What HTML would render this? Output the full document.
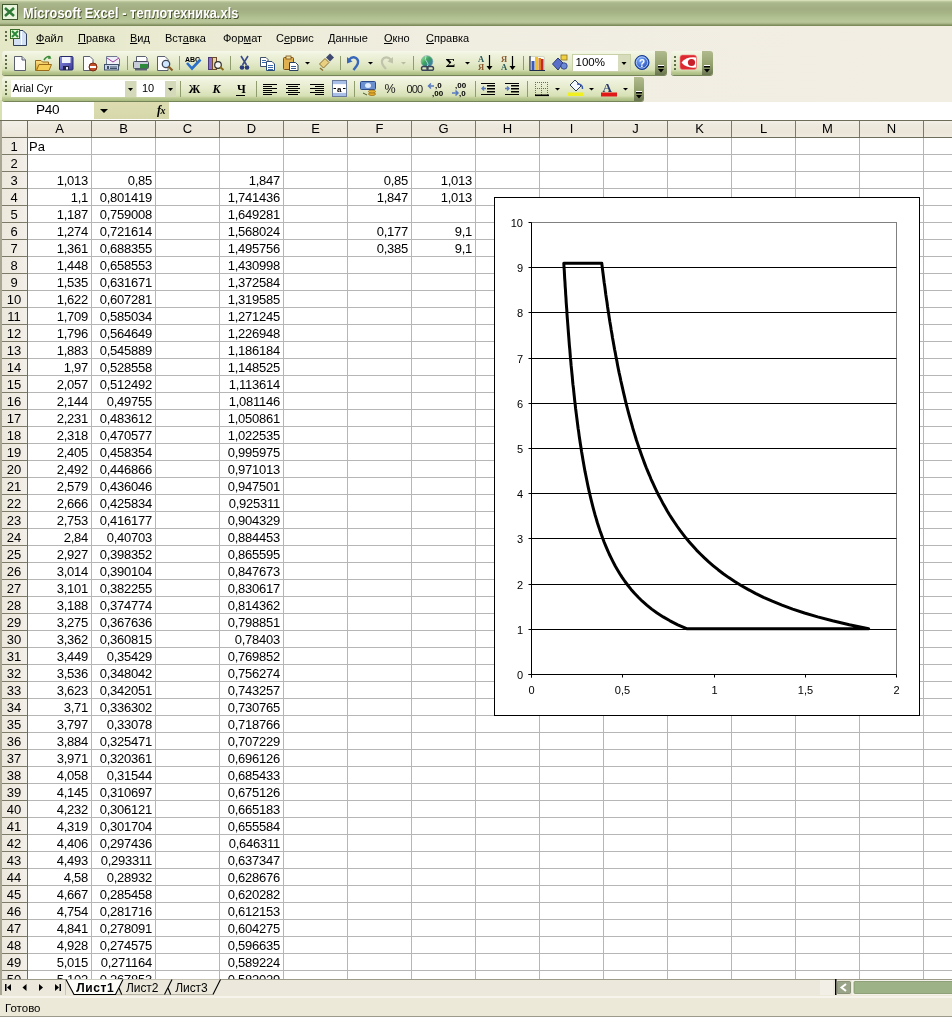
<!DOCTYPE html>
<html><head><meta charset="utf-8"><title>Excel</title>
<style>
html,body{margin:0;padding:0}
body{width:952px;height:1017px;position:relative;overflow:hidden;background:#fff;font-family:"Liberation Sans",sans-serif;color:#000}
.abs{position:absolute}
#title{position:absolute;left:0;top:0;width:952px;height:26px;
 background:linear-gradient(#e6eec8 0px,#c4cea4 1px,#a9b58b 3px,#a2ae82 9px,#a6b486 13px,#b2c292 18px,#b9c69a 22px,#a4b082 24px,#7e8c5c 25px,#7e8c5c 26px)}
#title .t{position:absolute;left:23px;top:5px;font:bold 14px/17px "Liberation Sans",sans-serif;color:#fff;text-shadow:1px 1px 0 #4a5230;white-space:nowrap;letter-spacing:0.1px;transform:scaleX(0.91);transform-origin:0 0}
#menubar{position:absolute;left:0;top:26px;width:952px;height:24px;background:linear-gradient(90deg,#e4e8c6 0px,#ebebd4 200px,#f0ede1 420px,#f2eee4 952px)}
#menubar .m{position:absolute;top:6px;font-size:11px;line-height:13px;white-space:nowrap}
#dock{position:absolute;left:0;top:50px;width:952px;height:52px;background:linear-gradient(90deg,#e4e8c6 0px,#ebebd4 200px,#f0ede1 420px,#f2eee4 952px)}
.tb{position:absolute;border-radius:3px;background:linear-gradient(#f6f8ea 0px,#eef2dc 4px,#e4eaca 12px,#d6e0b4 19px,#bccb94 21px,#a8ba80 24px);box-shadow:0 1px 0 #76845a}
.grip{position:absolute;width:2px;height:2px;background:#6b7550;box-shadow:1px 1px 0 #fff}
.chev{position:absolute;border-radius:0 3px 3px 0;background:linear-gradient(#b1bb8e,#919f6c 60%,#6a7550)}
.sep{position:absolute;width:1px;background:#8f9c6d;box-shadow:1px 0 0 #fff}
.dd{position:absolute;width:0;height:0;border-left:3px solid transparent;border-right:3px solid transparent;border-top:3px solid #000}
#fbar{position:absolute;left:0;top:102px;width:952px;height:18px;background:#fff}
#gridwrap{}
#grid{position:absolute;left:0;top:120px;width:952px;height:859px;background:#fff;overflow:hidden}
#cells{position:absolute;left:0;top:0;width:952px;height:859px;
 background-image:linear-gradient(90deg,transparent 63px,#b6b6b6 63px,#b6b6b6 64px,transparent 64px),linear-gradient(transparent 16px,#b6b6b6 16px,#b6b6b6 17px,transparent 17px);
 background-size:64px 17px,17px 17px;background-position:28px 18px,28px 18px}
.c{position:absolute;width:61px;height:17px;text-align:right;font-size:13px;line-height:17px;white-space:nowrap;letter-spacing:-0.25px}
.cl{position:absolute;height:17px;font-size:13px;line-height:17px;white-space:nowrap}
#colhdr{position:absolute;left:0;top:0;width:952px;height:859px}
#hrow{position:absolute;left:0;top:1px;width:952px;height:16px;background:linear-gradient(#f3f0e8 0px,#eee9de 4px,#ece5d9 11px,#efeae0 16px);
 background-image:linear-gradient(90deg,transparent 63px,#7c7b6a 63px,#7c7b6a 64px,transparent 64px),linear-gradient(#f3f0e8 0px,#eee9de 4px,#ece5d9 11px,#efeae0 16px);
 background-size:64px 16px,100% 100%;background-position:28px 0,0 0;background-repeat:repeat-x,no-repeat;border-bottom:1px solid #6e6d5c}
#rcol{position:absolute;left:0;top:18px;width:27px;height:841px;border-right:1px solid #6e6d5c;
 background-image:linear-gradient(transparent 16px,#7c7b6a 16px,#7c7b6a 17px,transparent 17px),linear-gradient(90deg,#ece8dc,#f0ece4 70%,#f3f0ea);
 background-size:27px 17px,100% 100%;background-repeat:repeat-y,no-repeat}
#corner{position:absolute;left:0;top:1px;width:27px;height:16px;border-right:1px solid #6e6d5c;background:linear-gradient(#f3f0e8,#ece6da)}
#fline{position:absolute;left:0;top:0;width:952px;height:1px;background:#6c6c58}
#wedge{position:absolute;left:0;top:0;width:2px;height:859px;background:#a9a793}
.ch{position:absolute;top:0px;width:63px;height:16px;text-align:center;font-size:13px;line-height:17px}
.rh{position:absolute;left:1px;width:26px;height:16px;text-align:center;font-size:13px;line-height:17px}
.chart{position:absolute;left:494px;top:197px}
.chart .ax{font-family:"Liberation Sans",sans-serif;font-size:11px}
#tabs{position:absolute;left:0;top:979px;width:952px;height:16px;background:#ece9dc}
#status{position:absolute;left:0;top:995px;width:952px;height:22px;background:#ece9d8}

#title,#menubar,#fbar,#grid,#tabs,#status,.chart,.tbsvg{will-change:transform}

</style></head><body>
<div id="title">
 <svg class="abs" style="left:2px;top:4px" width="16" height="16" viewBox="0 0 16 16"><rect x="0.5" y="0.5" width="15" height="15" fill="#e8f4dc" stroke="#3e5a2c"/><path d="M3 4 L12 12 M12 4 L3 12" stroke="#2e7a36" stroke-width="2.5"/></svg>
 <div class="t">Microsoft Excel - теплотехника.xls</div>
</div>
<div id="menubar">
 <svg class="abs" style="left:0;top:0" width="30" height="24" viewBox="0 26 30 24">
  <g fill="#5f6a48"><rect x="5" y="31" width="2" height="2"/><rect x="5" y="35" width="2" height="2"/><rect x="5" y="39" width="2" height="2"/></g>
  <path d="M13.5 30.5 H23 L26.5 34 V45.5 H13.5 Z" fill="#d4e0f4" stroke="#30405a"/><rect x="21" y="31" width="1" height="14" fill="#fff"/>
  <rect x="10.5" y="29.5" width="9" height="9" fill="#e8f8d8" stroke="#3a6a2a"/><path d="M12 31 L18 37 M18 31 L12 37" stroke="#2a8a3a" stroke-width="2"/>
 </svg>
 <div class="m" style="left:36px"><u>Ф</u>айл</div>
 <div class="m" style="left:78px"><u>П</u>равка</div>
 <div class="m" style="left:130px"><u>В</u>ид</div>
 <div class="m" style="left:165px">Вст<u>а</u>вка</div>
 <div class="m" style="left:223px">Фор<u>м</u>ат</div>
 <div class="m" style="left:276px">С<u>е</u>рвис</div>
 <div class="m" style="left:328px"><u>Д</u>анные</div>
 <div class="m" style="left:384px"><u>О</u>кно</div>
 <div class="m" style="left:426px"><u>С</u>правка</div>
</div>
<div id="dock"></div>
<div class="tb" style="left:2px;top:51px;width:665px;height:24px"></div>
<div class="chev" style="left:655px;top:51px;width:12px;height:24px"></div>
<div class="tb" style="left:671px;top:51px;width:42px;height:24px"></div>
<div class="chev" style="left:702px;top:51px;width:11px;height:24px"></div>
<div class="tb" style="left:2px;top:77px;width:642px;height:24px"></div>
<div class="chev" style="left:634px;top:77px;width:10px;height:24px"></div>
<svg class="abs tbsvg" style="left:0;top:50px" width="952" height="52" viewBox="0 50 952 52" font-family="Liberation Sans, sans-serif">
<defs>
 <linearGradient id="gFold" x1="0" y1="0" x2="0" y2="1"><stop offset="0" stop-color="#ffe58a"/><stop offset="1" stop-color="#d49a2a"/></linearGradient>
 <linearGradient id="gSave" x1="0" y1="0" x2="1" y2="1"><stop offset="0" stop-color="#8c8ee0"/><stop offset="1" stop-color="#3a3a9a"/></linearGradient>
 <linearGradient id="gGlobe" x1="0" y1="0" x2="1" y2="1"><stop offset="0" stop-color="#a8f0a0"/><stop offset="0.45" stop-color="#3aa060"/><stop offset="1" stop-color="#3a70c8"/></linearGradient>
 <radialGradient id="gHelp" cx="0.4" cy="0.35" r="0.7"><stop offset="0" stop-color="#7fb0ff"/><stop offset="1" stop-color="#1840b0"/></radialGradient>
</defs>
<!-- grips -->
<g fill="#5f6a48">
 <rect x="5" y="55" width="2" height="2"/><rect x="5" y="59" width="2" height="2"/><rect x="5" y="63" width="2" height="2"/><rect x="5" y="67" width="2" height="2"/>
 <rect x="5" y="81" width="2" height="2"/><rect x="5" y="85" width="2" height="2"/><rect x="5" y="89" width="2" height="2"/><rect x="5" y="93" width="2" height="2"/>
 <rect x="674" y="56" width="2" height="2"/><rect x="674" y="60" width="2" height="2"/><rect x="674" y="64" width="2" height="2"/><rect x="674" y="68" width="2" height="2"/>
</g>
<!-- New -->
<path d="M14.5 56.5 H22 L25.5 60 V70.5 H14.5 Z" fill="#fdfdff" stroke="#5a6070"/><path d="M22 56.5 V60 H25.5" fill="#cfd4e0" stroke="#5a6070"/>
<!-- Open -->
<path d="M35.5 60.5 H41 L42.5 62 H48.5 V70.5 H35.5 Z" fill="url(#gFold)" stroke="#9a6a18"/><path d="M36.5 70.5 L39 64.5 H51.5 L49 70.5 Z" fill="#f6cf58" stroke="#9a6a18"/>
<path d="M44 60 Q47 55 50.5 57.5" fill="none" stroke="#3a8a3a" stroke-width="1.6"/><path d="M49 55.5 L51.5 58.5 L48 59 Z" fill="#3a8a3a"/>
<!-- Save -->
<rect x="59.5" y="56.5" width="13.5" height="13.5" rx="1" fill="url(#gSave)" stroke="#262a6a"/><rect x="62" y="57" width="8.5" height="6" fill="#f2f4ff"/><rect x="63" y="66" width="6" height="4" fill="#20204a"/><rect x="66" y="67" width="2" height="2.5" fill="#e8e8ff"/>
<!-- Permission -->
<path d="M83.5 56.5 H90 L93 59.5 V70.5 H83.5 Z" fill="#fdfdff" stroke="#5a6070"/><circle cx="93" cy="67" r="4" fill="#c2502a" stroke="#7a2a10"/><rect x="90" y="66" width="6" height="2" fill="#fff"/>
<!-- Email -->
<path d="M106.5 56.5 H117 L119.5 59 V66 H106.5 Z" fill="#f0f0f8" stroke="#707890"/><path d="M107 58 L113 62 L119 58" fill="none" stroke="#a040a0" stroke-width="1"/>
<rect x="104.5" y="64.5" width="14" height="5.5" fill="#c8d4e8" stroke="#40506a"/><rect x="107" y="66" width="2" height="3" fill="#40506a"/><rect x="110" y="66.5" width="7" height="1" fill="#40506a"/><rect x="110" y="68" width="7" height="1" fill="#40506a"/>
<!-- seps -->
<g fill="#8f9c6d"><rect x="127" y="56" width="1" height="14"/><rect x="179" y="56" width="1" height="14"/><rect x="230" y="56" width="1" height="14"/><rect x="340" y="56" width="1" height="14"/><rect x="413" y="56" width="1" height="14"/><rect x="523" y="56" width="1" height="14"/>
<rect x="180" y="81" width="1" height="16"/><rect x="256" y="81" width="1" height="16"/><rect x="354" y="81" width="1" height="16"/><rect x="475" y="81" width="1" height="16"/><rect x="527" y="81" width="1" height="16"/></g>
<!-- Print -->
<path d="M136.5 56.5 H145.5 L147 58 V62 H136.5 Z" fill="#fff" stroke="#5a6070"/><rect x="133.5" y="61.5" width="15" height="7" rx="1" fill="#c8ccd8" stroke="#4a5060"/><rect x="140" y="64" width="8" height="4.5" fill="#2a8a3a"/><rect x="135" y="68.5" width="12" height="2" fill="#5a6070"/>
<!-- Preview -->
<path d="M157.5 56.5 H165 L168 59.5 V70.5 H157.5 Z" fill="#fdfdff" stroke="#5a6070"/><circle cx="166" cy="64" r="3.7" fill="#cfe6ff" stroke="#404858" stroke-width="1.3"/><path d="M168.5 66.5 L172.5 70.5" stroke="#8a5a20" stroke-width="2.2"/>
<!-- Spelling -->
<text x="185" y="61.5" font-size="7" font-weight="bold" fill="#000">ABC</text><path d="M187 63 L192 68.5 L200.5 59.5" fill="none" stroke="#2a70c8" stroke-width="2.6"/>
<!-- Research -->
<rect x="208.5" y="57.5" width="4" height="12" fill="#8a70c8" stroke="#4a3a7a"/><rect x="212.5" y="57.5" width="4" height="12" fill="#e8d4a8" stroke="#6a4a2a"/><circle cx="218" cy="65" r="3.3" fill="#f4f4f4" stroke="#303030" stroke-width="1.2"/><path d="M220 67 L223.5 70" stroke="#8a6a1a" stroke-width="2"/>
<!-- Cut -->
<path d="M241 56 L246.5 65 M248 56 L242.5 65" stroke="#3a4a8a" stroke-width="1.6"/><circle cx="242" cy="67.5" r="2.3" fill="#2a3a7a"/><circle cx="247" cy="67.5" r="2.3" fill="#2a3a7a"/>
<!-- Copy -->
<path d="M260.5 57.5 H266 L268 59.5 V66.5 H260.5 Z" fill="#fff" stroke="#40506a"/><path d="M266.5 61.5 H272 L274.5 64 V70.5 H266.5 Z" fill="#fff" stroke="#2a4a7a"/><g fill="#3a6aa8"><rect x="262" y="60" width="4" height="1"/><rect x="262" y="62" width="4" height="1"/><rect x="268" y="65" width="5" height="1"/><rect x="268" y="67" width="5" height="1"/><rect x="268" y="69" width="5" height="1"/></g>
<!-- Paste -->
<rect x="283.5" y="57.5" width="10" height="12" rx="1" fill="#e0b050" stroke="#7a5018"/><rect x="286" y="56" width="5" height="3" fill="#f0e0a0" stroke="#7a5018" stroke-width="0.8"/><path d="M289.5 62.5 H295.5 L298 65 V70.5 H289.5 Z" fill="#fff" stroke="#2a4060"/><rect x="291" y="66" width="5" height="1" fill="#3a5a90"/><rect x="291" y="68" width="5" height="1" fill="#3a5a90"/>
<!-- dropdowns -->
<g fill="#000"><path d="M305 62 H310 L307.5 64.5 Z"/><path d="M368 62 H373 L370.5 64.5 Z"/><path d="M465 62 H470 L467.5 64.5 Z"/></g>
<path d="M401 62 H406 L403.5 64.5 Z" fill="#b8bca0"/>
<!-- Format painter -->
<path d="M319.5 64 L325 58.5 L329 62.5 L323.5 68 Z" fill="#e8d080" stroke="#8a7030"/><path d="M326 57.5 L330 53.5 L334 57.5 L330 61.5 Z" fill="#404a70"/><path d="M320 68 L323 70.5" stroke="#8a7030" stroke-width="1.5"/>
<!-- Undo -->
<path d="M349 60 Q352 56 356 58 Q360 61 356.5 66 L353.5 70" fill="none" stroke="#3a68b8" stroke-width="2.4"/><path d="M347 57 L352.5 61.5 L347 63.5 Z" fill="#3a68b8"/>
<!-- Redo disabled -->
<path d="M391 60 Q388 56 384 58 Q380 61 383.5 66 L386 69" fill="none" stroke="#c0c4aa" stroke-width="2.2"/><path d="M393 57 L387.5 61.5 L393 63.5 Z" fill="#c0c4aa"/>
<!-- Hyperlink -->
<circle cx="427" cy="61.5" r="5.8" fill="url(#gGlobe)" stroke="#6a9aa8" stroke-width="0.6"/><path d="M426 56 Q424 60 427 62 Q429 64 427 67" fill="none" stroke="#d8f0ff" stroke-width="0.9" opacity="0.8"/>
<rect x="421.5" y="66.5" width="6.5" height="3.8" rx="1.9" fill="none" stroke="#3a4458" stroke-width="1.4"/><rect x="427" y="66.5" width="6.5" height="3.8" rx="1.9" fill="none" stroke="#3a4458" stroke-width="1.4"/>
<!-- Sigma -->
<text x="445.5" y="67" font-size="13.5" font-weight="bold" font-family="Liberation Serif, serif" fill="#000" transform="translate(445.5 67) scale(1.1 1) translate(-445.5 -67)">&#931;</text>
<!-- Sort asc -->
<text x="478" y="62" font-size="8.5" font-weight="bold" font-family="Liberation Serif, serif" fill="#2a5a5a">A</text><text x="478" y="70" font-size="8.5" font-weight="bold" font-family="Liberation Serif, serif" fill="#8a5a30">Я</text><path d="M489.5 55 V69" stroke="#000" stroke-width="1.2"/><path d="M486.5 66 L489.5 70 L492.5 66 Z" fill="#000"/>
<!-- Sort desc -->
<text x="501" y="62" font-size="8.5" font-weight="bold" font-family="Liberation Serif, serif" fill="#8a5a30">Я</text><text x="501" y="70" font-size="8.5" font-weight="bold" font-family="Liberation Serif, serif" fill="#2a5a5a">A</text><path d="M512.5 56 V69" stroke="#000" stroke-width="1.2"/><path d="M509.5 66 L512.5 70 L515.5 66 Z" fill="#000"/>
<!-- Chart wizard -->
<rect x="529.5" y="56.5" width="15" height="14" rx="1.5" fill="#fbfbf6" stroke="#c8ccb8" stroke-width="0.8"/>
<path d="M530 56 V70.5 H545" fill="none" stroke="#1e2a4a" stroke-width="1.2"/><rect x="531.5" y="61" width="3" height="9" fill="#3a5ab8"/><rect x="535" y="57" width="3" height="13" fill="#f0c030"/><rect x="538.5" y="58" width="2.5" height="12" fill="#e07a20"/><rect x="541" y="59" width="2.5" height="11" fill="#c02a2a"/>
<!-- Drawing -->
<path d="M552.5 64 L558 58 L563 63 L558 70 Z" fill="#5a70c8" stroke="#2a3a7a"/><rect x="561" y="55" width="6" height="5" fill="#f0d040" stroke="#8a7020" stroke-width="0.8"/><circle cx="564" cy="66" r="3.2" fill="#6a8ad8" stroke="#2a3a7a" stroke-width="0.8"/>
<!-- Zoom box -->
<rect x="572.5" y="54.5" width="58" height="17" fill="#fff" stroke="#c8d0a8"/><rect x="618" y="55" width="12" height="16" fill="#d6dcbc"/><path d="M621.5 62 H626.5 L624 65 Z" fill="#000"/>
<text x="575.5" y="65.7" font-size="11.5" fill="#000">100%</text>
<!-- Help -->
<circle cx="642" cy="62.5" r="7" fill="url(#gHelp)" stroke="#163a8a" stroke-width="1"/><circle cx="642" cy="62.5" r="5.6" fill="none" stroke="#c8dcff" stroke-width="0.8"/><text x="642" y="66.5" font-size="10" font-weight="bold" text-anchor="middle" fill="#fff">?</text>
<!-- Chevron glyphs -->
<g fill="#000"><rect x="658" y="66" width="6" height="1.5"/><path d="M658 69 H664 L661 72.5 Z"/><rect x="704" y="66" width="6" height="1.5"/><path d="M704 69 H710 L707 72.5 Z"/><rect x="636" y="92" width="6" height="1.5"/><path d="M636 95 H642 L639 98.5 Z"/></g>
<g fill="#fff"><rect x="658" y="65" width="6" height="1"/><rect x="704" y="65" width="6" height="1"/><rect x="636" y="91" width="6" height="1"/></g>
<!-- Red ABBYY icon -->
<rect x="680" y="55" width="16.5" height="14.5" rx="2.5" fill="#dc2a30" stroke="#f08a8a" stroke-width="0.6"/><path d="M681.5 62.5 Q686 56.5 696 57.5 L696 67.5 Q686 68.5 681.5 62.5 Z" fill="#fff"/><circle cx="691.5" cy="62.5" r="3.6" fill="#c8202a"/>
<!-- Toolbar 2: font box -->
<rect x="11" y="80" width="126" height="17" fill="#fff"/><rect x="125" y="81" width="11.5" height="16" fill="#d4d9ba"/><path d="M128 88 H133 L130.5 91 Z" fill="#000"/>
<text x="12.5" y="92" font-size="10.5" fill="#000">Arial Cyr</text>
<rect x="137" y="80" width="39" height="17" fill="#fff"/><rect x="165" y="81" width="11" height="16" fill="#d4d9ba"/><path d="M168 88 H173 L170.5 91 Z" fill="#000"/>
<text x="142" y="92" font-size="11" fill="#000">10</text>
<!-- B I U -->
<text x="188.5" y="93" font-size="12" font-weight="bold" font-family="Liberation Serif, serif" fill="#000">Ж</text>
<text x="212.5" y="93" font-size="12" font-weight="bold" font-style="italic" font-family="Liberation Serif, serif" fill="#000">К</text>
<text x="237" y="93" font-size="12" font-weight="bold" font-family="Liberation Serif, serif" fill="#000">Ч</text><rect x="236" y="95" width="9" height="1" fill="#000"/>
<!-- align -->
<g fill="#000">
 <rect x="263" y="84" width="14" height="1"/><rect x="263" y="86" width="9" height="1"/><rect x="263" y="88" width="14" height="1"/><rect x="263" y="90" width="9" height="1"/><rect x="263" y="92" width="14" height="1"/><rect x="263" y="94" width="9" height="1"/>
 <rect x="286" y="84" width="14" height="1"/><rect x="288" y="86" width="10" height="1"/><rect x="286" y="88" width="14" height="1"/><rect x="288" y="90" width="10" height="1"/><rect x="286" y="92" width="14" height="1"/><rect x="288" y="94" width="10" height="1"/>
 <rect x="310" y="84" width="14" height="1"/><rect x="315" y="86" width="9" height="1"/><rect x="310" y="88" width="14" height="1"/><rect x="315" y="90" width="9" height="1"/><rect x="310" y="92" width="14" height="1"/><rect x="315" y="94" width="9" height="1"/>
</g>
<!-- merge -->
<rect x="332.5" y="80.5" width="14" height="16" fill="#f4f6fa" stroke="#6a7a9a"/><rect x="333" y="81" width="13" height="3" fill="#a8c0e8"/><rect x="333" y="93" width="13" height="3" fill="#a8c0e8"/><rect x="333" y="85" width="13" height="7" fill="#fff"/><text x="337" y="91.5" font-size="8" font-weight="bold" fill="#000">a</text><path d="M333.5 88.5 H336 M343 88.5 H345.5" stroke="#000"/>
<!-- currency -->
<rect x="360.5" y="81.5" width="15" height="8" rx="1" fill="#6a90d0" stroke="#2a4a8a"/><ellipse cx="368" cy="85.5" rx="3" ry="2.5" fill="#e0ecff"/><ellipse cx="372" cy="94" rx="3.5" ry="1.5" fill="#e8b030" stroke="#8a6010" stroke-width="0.7"/><ellipse cx="372" cy="91.5" rx="3.5" ry="1.5" fill="#e8b030" stroke="#8a6010" stroke-width="0.7"/><path d="M363 93 L367 95" stroke="#4a5a2a"/>
<text x="384.5" y="93" font-size="12.5" fill="#1a1a1a">%</text>
<text x="406.5" y="93" font-size="11" fill="#1a1a1a" letter-spacing="-0.9">000</text>
<!-- inc/dec decimal -->
<text x="435" y="88" font-size="8" font-weight="bold" fill="#000">,0</text><text x="432" y="96" font-size="8" font-weight="bold" fill="#000">,00</text><path d="M434 86 H428.5 M431 83.5 L428.5 86 L431 88.5" fill="none" stroke="#5a7ac0" stroke-width="1.5"/>
<text x="455" y="88" font-size="8" font-weight="bold" fill="#000">,00</text><text x="459" y="96" font-size="8" font-weight="bold" fill="#000">,0</text><path d="M452 93 H458 M455.5 90.5 L458 93 L455.5 95.5" fill="none" stroke="#5a7ac0" stroke-width="1.5"/>
<!-- indent -->
<g fill="#000"><rect x="481" y="83" width="14" height="1"/><rect x="487" y="85" width="8" height="1.5"/><rect x="487" y="88" width="8" height="1.5"/><rect x="487" y="91" width="8" height="1.5"/><rect x="481" y="94" width="14" height="1"/>
<rect x="505" y="83" width="14" height="1"/><rect x="511" y="85" width="8" height="1.5"/><rect x="511" y="88" width="8" height="1.5"/><rect x="511" y="91" width="8" height="1.5"/><rect x="505" y="94" width="14" height="1"/></g>
<path d="M486 88.5 L482 88.5 M484 86.5 L482 88.5 L484 90.5" fill="none" stroke="#5a7ac0" stroke-width="1.4"/><path d="M505 88.5 L509 88.5 M507 86.5 L509 88.5 L507 90.5" fill="none" stroke="#5a7ac0" stroke-width="1.4"/>
<!-- borders -->
<g stroke="#6a6a6a" stroke-width="1" stroke-dasharray="1 1" fill="none"><path d="M535 82.5 H548 M535 88.5 H548 M535.5 82 V95 M541.5 82 V95 M547.5 82 V95"/></g><rect x="535" y="94.5" width="14" height="1.6" fill="#000"/>
<g fill="#000"><path d="M555 88 H560 L557.5 90.5 Z"/><path d="M589 88 H594 L591.5 90.5 Z"/><path d="M623 88 H628 L625.5 90.5 Z"/></g>
<!-- fill color -->
<path d="M570 85 L575 80 L581 86 L576 91 Z" fill="#f4f8ff" stroke="#2a3a5a"/><path d="M577 84 Q583 84 582.5 89" fill="none" stroke="#3a5ab0" stroke-width="1.5"/><rect x="568" y="92.5" width="15" height="3.5" fill="#f0f020"/>
<!-- font color -->
<text x="602.5" y="91.5" font-size="13" font-weight="bold" font-family="Liberation Serif, serif" fill="#2a3a6a">A</text><rect x="601" y="92.5" width="16" height="4" fill="#e01818"/>
</svg>

<div id="fbar">
 <div class="abs" style="left:2px;top:0px;width:92px;height:18px;background:#fff"></div>
 <div class="abs" style="left:36px;top:0px;font-size:13.6px;line-height:15px;letter-spacing:-0.3px">P40</div><div class="abs" style="left:0;top:-2px;width:2px;height:20px;background:#d6e0b2"></div>
 <div class="abs" style="left:94px;top:0px;width:75px;height:17px;background:linear-gradient(#dcdcb0,#d6d8ac)"></div>
 <div class="abs" style="left:100px;top:7px;width:0;height:0;border-left:4px solid transparent;border-right:4px solid transparent;border-top:4px solid #000"></div>
 <div class="abs" style="left:157px;top:0px;font:italic bold 12px 'Liberation Serif',serif;letter-spacing:-0.5px;line-height:16px">f<span style="font-size:10px">x</span></div>
</div>
<div id="tabs">
<svg class="abs" style="left:0;top:0" width="952" height="16" viewBox="0 979 952 16" font-family="Liberation Sans, sans-serif">
 <rect x="0" y="979" width="952" height="1" fill="#9c9a88"/>
 <rect x="0" y="979" width="2" height="16" fill="#a9a793"/>
 <g fill="#000">
  <rect x="5" y="984" width="1.5" height="7"/><path d="M11 984 V991 L7 987.5 Z"/>
  <path d="M26.5 984 V991 L22.5 987.5 Z"/>
  <path d="M39 984 V991 L43 987.5 Z"/>
  <path d="M55 984 V991 L59 987.5 Z"/><rect x="59.5" y="984" width="1.5" height="7"/>
 </g>
 <rect x="65" y="980" width="1" height="15" fill="#c8c6b4"/>
 <!-- tabs -->
 <path d="M123 979.5 L116 994.5 H164.5 L172 979.5" fill="#ebe8db"/>
 <path d="M172 979.5 L164.5 994.5 H213 L220.5 979.5" fill="#ebe8db"/>
 <path d="M164.5 994.5 H213" stroke="#b8b6a8" stroke-width="1"/>
 <path d="M116 994.5 H164.5" stroke="#b8b6a8" stroke-width="1"/>
 <path d="M119 988 L121.7 994.5" stroke="#000" stroke-width="1.1"/>
 <path d="M168 988 L170.7 994.5" stroke="#000" stroke-width="1.1"/>
 <path d="M164.5 994.5 L172 979.5" stroke="#000" stroke-width="1.1"/>
 <path d="M213 994.5 L220.5 979.5" stroke="#000" stroke-width="1.1"/>
 <!-- active tab -->
 <path d="M66 979.5 L74 994.5 H115.5 L123 979.5 Z" fill="#fdfdfa"/>
 <path d="M66 979.5 L74 994.5 H115.5 L123 979.5" fill="none" stroke="#000" stroke-width="1.1"/>
 <text x="76.3" y="992" font-size="12" font-weight="bold" fill="#000" letter-spacing="0.6">Лист1</text>
 <text x="126" y="991.7" font-size="12" fill="#000" letter-spacing="-0.1">Лист2</text>
 <text x="175.3" y="991.7" font-size="12" fill="#000" letter-spacing="-0.1">Лист3</text>
 <!-- scrollbar -->
 <rect x="820" y="980" width="13" height="15" fill="#f2f0e6"/>
 <rect x="835" y="979" width="1.5" height="16" fill="#000"/>
 <rect x="837" y="981.5" width="13.5" height="12" rx="1" fill="#9aa488" stroke="#7c8668" stroke-width="0.8"/>
 <path d="M846 984 L841.5 987.5 L846 991" fill="none" stroke="#fff" stroke-width="2"/>
 <rect x="852" y="980" width="100" height="15" fill="#f4f2e8"/>
 <rect x="854" y="981.5" width="100" height="12" rx="1" fill="#9db287" stroke="#7f9468" stroke-width="0.8"/>
</svg>
</div>
<div id="status"><div class="abs" style="left:0;top:1px;width:952px;height:2px;background:#f6f4ec"></div><div class="abs" style="left:0;top:21px;width:952px;height:1px;background:#9c9a8a"></div><div class="abs" style="left:5px;top:7px;font-size:11.5px;line-height:13px">Готово</div></div>

<div id="grid">
<div id="cells">
<div class="cl" style="left:29px;top:18px">Pa</div>
<div class="c" style="left:27px;top:52px">1,013</div>
<div class="c" style="left:91px;top:52px">0,85</div>
<div class="c" style="left:219px;top:52px">1,847</div>
<div class="c" style="left:27px;top:69px">1,1</div>
<div class="c" style="left:91px;top:69px">0,801419</div>
<div class="c" style="left:219px;top:69px">1,741436</div>
<div class="c" style="left:27px;top:86px">1,187</div>
<div class="c" style="left:91px;top:86px">0,759008</div>
<div class="c" style="left:219px;top:86px">1,649281</div>
<div class="c" style="left:27px;top:103px">1,274</div>
<div class="c" style="left:91px;top:103px">0,721614</div>
<div class="c" style="left:219px;top:103px">1,568024</div>
<div class="c" style="left:27px;top:120px">1,361</div>
<div class="c" style="left:91px;top:120px">0,688355</div>
<div class="c" style="left:219px;top:120px">1,495756</div>
<div class="c" style="left:27px;top:137px">1,448</div>
<div class="c" style="left:91px;top:137px">0,658553</div>
<div class="c" style="left:219px;top:137px">1,430998</div>
<div class="c" style="left:27px;top:154px">1,535</div>
<div class="c" style="left:91px;top:154px">0,631671</div>
<div class="c" style="left:219px;top:154px">1,372584</div>
<div class="c" style="left:27px;top:171px">1,622</div>
<div class="c" style="left:91px;top:171px">0,607281</div>
<div class="c" style="left:219px;top:171px">1,319585</div>
<div class="c" style="left:27px;top:188px">1,709</div>
<div class="c" style="left:91px;top:188px">0,585034</div>
<div class="c" style="left:219px;top:188px">1,271245</div>
<div class="c" style="left:27px;top:205px">1,796</div>
<div class="c" style="left:91px;top:205px">0,564649</div>
<div class="c" style="left:219px;top:205px">1,226948</div>
<div class="c" style="left:27px;top:222px">1,883</div>
<div class="c" style="left:91px;top:222px">0,545889</div>
<div class="c" style="left:219px;top:222px">1,186184</div>
<div class="c" style="left:27px;top:239px">1,97</div>
<div class="c" style="left:91px;top:239px">0,528558</div>
<div class="c" style="left:219px;top:239px">1,148525</div>
<div class="c" style="left:27px;top:256px">2,057</div>
<div class="c" style="left:91px;top:256px">0,512492</div>
<div class="c" style="left:219px;top:256px">1,113614</div>
<div class="c" style="left:27px;top:273px">2,144</div>
<div class="c" style="left:91px;top:273px">0,49755</div>
<div class="c" style="left:219px;top:273px">1,081146</div>
<div class="c" style="left:27px;top:290px">2,231</div>
<div class="c" style="left:91px;top:290px">0,483612</div>
<div class="c" style="left:219px;top:290px">1,050861</div>
<div class="c" style="left:27px;top:307px">2,318</div>
<div class="c" style="left:91px;top:307px">0,470577</div>
<div class="c" style="left:219px;top:307px">1,022535</div>
<div class="c" style="left:27px;top:324px">2,405</div>
<div class="c" style="left:91px;top:324px">0,458354</div>
<div class="c" style="left:219px;top:324px">0,995975</div>
<div class="c" style="left:27px;top:341px">2,492</div>
<div class="c" style="left:91px;top:341px">0,446866</div>
<div class="c" style="left:219px;top:341px">0,971013</div>
<div class="c" style="left:27px;top:358px">2,579</div>
<div class="c" style="left:91px;top:358px">0,436046</div>
<div class="c" style="left:219px;top:358px">0,947501</div>
<div class="c" style="left:27px;top:375px">2,666</div>
<div class="c" style="left:91px;top:375px">0,425834</div>
<div class="c" style="left:219px;top:375px">0,925311</div>
<div class="c" style="left:27px;top:392px">2,753</div>
<div class="c" style="left:91px;top:392px">0,416177</div>
<div class="c" style="left:219px;top:392px">0,904329</div>
<div class="c" style="left:27px;top:409px">2,84</div>
<div class="c" style="left:91px;top:409px">0,40703</div>
<div class="c" style="left:219px;top:409px">0,884453</div>
<div class="c" style="left:27px;top:426px">2,927</div>
<div class="c" style="left:91px;top:426px">0,398352</div>
<div class="c" style="left:219px;top:426px">0,865595</div>
<div class="c" style="left:27px;top:443px">3,014</div>
<div class="c" style="left:91px;top:443px">0,390104</div>
<div class="c" style="left:219px;top:443px">0,847673</div>
<div class="c" style="left:27px;top:460px">3,101</div>
<div class="c" style="left:91px;top:460px">0,382255</div>
<div class="c" style="left:219px;top:460px">0,830617</div>
<div class="c" style="left:27px;top:477px">3,188</div>
<div class="c" style="left:91px;top:477px">0,374774</div>
<div class="c" style="left:219px;top:477px">0,814362</div>
<div class="c" style="left:27px;top:494px">3,275</div>
<div class="c" style="left:91px;top:494px">0,367636</div>
<div class="c" style="left:219px;top:494px">0,798851</div>
<div class="c" style="left:27px;top:511px">3,362</div>
<div class="c" style="left:91px;top:511px">0,360815</div>
<div class="c" style="left:219px;top:511px">0,78403</div>
<div class="c" style="left:27px;top:528px">3,449</div>
<div class="c" style="left:91px;top:528px">0,35429</div>
<div class="c" style="left:219px;top:528px">0,769852</div>
<div class="c" style="left:27px;top:545px">3,536</div>
<div class="c" style="left:91px;top:545px">0,348042</div>
<div class="c" style="left:219px;top:545px">0,756274</div>
<div class="c" style="left:27px;top:562px">3,623</div>
<div class="c" style="left:91px;top:562px">0,342051</div>
<div class="c" style="left:219px;top:562px">0,743257</div>
<div class="c" style="left:27px;top:579px">3,71</div>
<div class="c" style="left:91px;top:579px">0,336302</div>
<div class="c" style="left:219px;top:579px">0,730765</div>
<div class="c" style="left:27px;top:596px">3,797</div>
<div class="c" style="left:91px;top:596px">0,33078</div>
<div class="c" style="left:219px;top:596px">0,718766</div>
<div class="c" style="left:27px;top:613px">3,884</div>
<div class="c" style="left:91px;top:613px">0,325471</div>
<div class="c" style="left:219px;top:613px">0,707229</div>
<div class="c" style="left:27px;top:630px">3,971</div>
<div class="c" style="left:91px;top:630px">0,320361</div>
<div class="c" style="left:219px;top:630px">0,696126</div>
<div class="c" style="left:27px;top:647px">4,058</div>
<div class="c" style="left:91px;top:647px">0,31544</div>
<div class="c" style="left:219px;top:647px">0,685433</div>
<div class="c" style="left:27px;top:664px">4,145</div>
<div class="c" style="left:91px;top:664px">0,310697</div>
<div class="c" style="left:219px;top:664px">0,675126</div>
<div class="c" style="left:27px;top:681px">4,232</div>
<div class="c" style="left:91px;top:681px">0,306121</div>
<div class="c" style="left:219px;top:681px">0,665183</div>
<div class="c" style="left:27px;top:698px">4,319</div>
<div class="c" style="left:91px;top:698px">0,301704</div>
<div class="c" style="left:219px;top:698px">0,655584</div>
<div class="c" style="left:27px;top:715px">4,406</div>
<div class="c" style="left:91px;top:715px">0,297436</div>
<div class="c" style="left:219px;top:715px">0,646311</div>
<div class="c" style="left:27px;top:732px">4,493</div>
<div class="c" style="left:91px;top:732px">0,293311</div>
<div class="c" style="left:219px;top:732px">0,637347</div>
<div class="c" style="left:27px;top:749px">4,58</div>
<div class="c" style="left:91px;top:749px">0,28932</div>
<div class="c" style="left:219px;top:749px">0,628676</div>
<div class="c" style="left:27px;top:766px">4,667</div>
<div class="c" style="left:91px;top:766px">0,285458</div>
<div class="c" style="left:219px;top:766px">0,620282</div>
<div class="c" style="left:27px;top:783px">4,754</div>
<div class="c" style="left:91px;top:783px">0,281716</div>
<div class="c" style="left:219px;top:783px">0,612153</div>
<div class="c" style="left:27px;top:800px">4,841</div>
<div class="c" style="left:91px;top:800px">0,278091</div>
<div class="c" style="left:219px;top:800px">0,604275</div>
<div class="c" style="left:27px;top:817px">4,928</div>
<div class="c" style="left:91px;top:817px">0,274575</div>
<div class="c" style="left:219px;top:817px">0,596635</div>
<div class="c" style="left:27px;top:834px">5,015</div>
<div class="c" style="left:91px;top:834px">0,271164</div>
<div class="c" style="left:219px;top:834px">0,589224</div>
<div class="c" style="left:27px;top:851px">5,102</div>
<div class="c" style="left:91px;top:851px">0,267853</div>
<div class="c" style="left:219px;top:851px">0,582029</div>
<div class="c" style="left:347px;top:52px">0,85</div>
<div class="c" style="left:411px;top:52px">1,013</div>
<div class="c" style="left:347px;top:69px">1,847</div>
<div class="c" style="left:411px;top:69px">1,013</div>
<div class="c" style="left:347px;top:103px">0,177</div>
<div class="c" style="left:411px;top:103px">9,1</div>
<div class="c" style="left:347px;top:120px">0,385</div>
<div class="c" style="left:411px;top:120px">9,1</div>
</div>
<div id="colhdr"><div id="hrow"></div><div id="rcol"></div><div id="corner"></div><div class="ch" style="left:28px">A</div>
<div class="ch" style="left:92px">B</div>
<div class="ch" style="left:156px">C</div>
<div class="ch" style="left:220px">D</div>
<div class="ch" style="left:284px">E</div>
<div class="ch" style="left:348px">F</div>
<div class="ch" style="left:412px">G</div>
<div class="ch" style="left:476px">H</div>
<div class="ch" style="left:540px">I</div>
<div class="ch" style="left:604px">J</div>
<div class="ch" style="left:668px">K</div>
<div class="ch" style="left:732px">L</div>
<div class="ch" style="left:796px">M</div>
<div class="ch" style="left:860px">N</div>
<div class="rh" style="top:18px">1</div>
<div class="rh" style="top:35px">2</div>
<div class="rh" style="top:52px">3</div>
<div class="rh" style="top:69px">4</div>
<div class="rh" style="top:86px">5</div>
<div class="rh" style="top:103px">6</div>
<div class="rh" style="top:120px">7</div>
<div class="rh" style="top:137px">8</div>
<div class="rh" style="top:154px">9</div>
<div class="rh" style="top:171px">10</div>
<div class="rh" style="top:188px">11</div>
<div class="rh" style="top:205px">12</div>
<div class="rh" style="top:222px">13</div>
<div class="rh" style="top:239px">14</div>
<div class="rh" style="top:256px">15</div>
<div class="rh" style="top:273px">16</div>
<div class="rh" style="top:290px">17</div>
<div class="rh" style="top:307px">18</div>
<div class="rh" style="top:324px">19</div>
<div class="rh" style="top:341px">20</div>
<div class="rh" style="top:358px">21</div>
<div class="rh" style="top:375px">22</div>
<div class="rh" style="top:392px">23</div>
<div class="rh" style="top:409px">24</div>
<div class="rh" style="top:426px">25</div>
<div class="rh" style="top:443px">26</div>
<div class="rh" style="top:460px">27</div>
<div class="rh" style="top:477px">28</div>
<div class="rh" style="top:494px">29</div>
<div class="rh" style="top:511px">30</div>
<div class="rh" style="top:528px">31</div>
<div class="rh" style="top:545px">32</div>
<div class="rh" style="top:562px">33</div>
<div class="rh" style="top:579px">34</div>
<div class="rh" style="top:596px">35</div>
<div class="rh" style="top:613px">36</div>
<div class="rh" style="top:630px">37</div>
<div class="rh" style="top:647px">38</div>
<div class="rh" style="top:664px">39</div>
<div class="rh" style="top:681px">40</div>
<div class="rh" style="top:698px">41</div>
<div class="rh" style="top:715px">42</div>
<div class="rh" style="top:732px">43</div>
<div class="rh" style="top:749px">44</div>
<div class="rh" style="top:766px">45</div>
<div class="rh" style="top:783px">46</div>
<div class="rh" style="top:800px">47</div>
<div class="rh" style="top:817px">48</div>
<div class="rh" style="top:834px">49</div>
<div class="rh" style="top:851px">50</div><div id="wedge"></div><div id="fline"></div></div>
</div>
<svg class="chart" width="426" height="519" viewBox="0 0 426 519">
<rect x="0.5" y="0.5" width="425" height="518" fill="#fff" stroke="#000" stroke-width="1"/>
<rect x="37.5" y="25.5" width="365.0" height="452.0" fill="none" stroke="#808080" stroke-width="1"/>
<line x1="37.5" y1="432.5" x2="402.5" y2="432.5" stroke="#000" stroke-width="1"/>
<line x1="37.5" y1="387.5" x2="402.5" y2="387.5" stroke="#000" stroke-width="1"/>
<line x1="37.5" y1="341.5" x2="402.5" y2="341.5" stroke="#000" stroke-width="1"/>
<line x1="37.5" y1="296.5" x2="402.5" y2="296.5" stroke="#000" stroke-width="1"/>
<line x1="37.5" y1="251.5" x2="402.5" y2="251.5" stroke="#000" stroke-width="1"/>
<line x1="37.5" y1="206.5" x2="402.5" y2="206.5" stroke="#000" stroke-width="1"/>
<line x1="37.5" y1="161.5" x2="402.5" y2="161.5" stroke="#000" stroke-width="1"/>
<line x1="37.5" y1="115.5" x2="402.5" y2="115.5" stroke="#000" stroke-width="1"/>
<line x1="37.5" y1="70.5" x2="402.5" y2="70.5" stroke="#000" stroke-width="1"/>
<line x1="37.5" y1="25.5" x2="37.5" y2="480.5" stroke="#000" stroke-width="1"/>
<line x1="34.5" y1="477.5" x2="402.5" y2="477.5" stroke="#000" stroke-width="1"/>
<line x1="34.5" y1="477.5" x2="37.5" y2="477.5" stroke="#000" stroke-width="1"/>
<text x="29" y="481.5" text-anchor="end" class="ax">0</text>
<line x1="34.5" y1="432.5" x2="37.5" y2="432.5" stroke="#000" stroke-width="1"/>
<text x="29" y="436.5" text-anchor="end" class="ax">1</text>
<line x1="34.5" y1="387.5" x2="37.5" y2="387.5" stroke="#000" stroke-width="1"/>
<text x="29" y="391.5" text-anchor="end" class="ax">2</text>
<line x1="34.5" y1="341.5" x2="37.5" y2="341.5" stroke="#000" stroke-width="1"/>
<text x="29" y="345.5" text-anchor="end" class="ax">3</text>
<line x1="34.5" y1="296.5" x2="37.5" y2="296.5" stroke="#000" stroke-width="1"/>
<text x="29" y="300.5" text-anchor="end" class="ax">4</text>
<line x1="34.5" y1="251.5" x2="37.5" y2="251.5" stroke="#000" stroke-width="1"/>
<text x="29" y="255.5" text-anchor="end" class="ax">5</text>
<line x1="34.5" y1="206.5" x2="37.5" y2="206.5" stroke="#000" stroke-width="1"/>
<text x="29" y="210.5" text-anchor="end" class="ax">6</text>
<line x1="34.5" y1="161.5" x2="37.5" y2="161.5" stroke="#000" stroke-width="1"/>
<text x="29" y="165.5" text-anchor="end" class="ax">7</text>
<line x1="34.5" y1="115.5" x2="37.5" y2="115.5" stroke="#000" stroke-width="1"/>
<text x="29" y="119.5" text-anchor="end" class="ax">8</text>
<line x1="34.5" y1="70.5" x2="37.5" y2="70.5" stroke="#000" stroke-width="1"/>
<text x="29" y="74.5" text-anchor="end" class="ax">9</text>
<line x1="34.5" y1="25.5" x2="37.5" y2="25.5" stroke="#000" stroke-width="1"/>
<text x="29" y="29.5" text-anchor="end" class="ax">10</text>
<line x1="37.5" y1="477.5" x2="37.5" y2="480.5" stroke="#000" stroke-width="1"/>
<text x="37.5" y="497" text-anchor="middle" class="ax">0</text>
<line x1="128.5" y1="477.5" x2="128.5" y2="480.5" stroke="#000" stroke-width="1"/>
<text x="128.5" y="497" text-anchor="middle" class="ax">0,5</text>
<line x1="220.5" y1="477.5" x2="220.5" y2="480.5" stroke="#000" stroke-width="1"/>
<text x="220.5" y="497" text-anchor="middle" class="ax">1</text>
<line x1="311.5" y1="477.5" x2="311.5" y2="480.5" stroke="#000" stroke-width="1"/>
<text x="311.5" y="497" text-anchor="middle" class="ax">1,5</text>
<line x1="402.5" y1="477.5" x2="402.5" y2="480.5" stroke="#000" stroke-width="1"/>
<text x="402.5" y="497" text-anchor="middle" class="ax">2</text>
<polygon points="192.6,431.7 183.8,427.8 176.0,423.8 169.2,419.9 163.1,416.0 157.7,412.1 152.8,408.1 148.3,404.2 144.3,400.3 140.5,396.3 137.1,392.4 134.0,388.5 131.0,384.5 128.3,380.6 125.8,376.7 123.4,372.7 121.1,368.8 119.1,364.9 117.1,360.9 115.2,357.0 113.5,353.1 111.8,349.1 110.2,345.2 108.7,341.3 107.3,337.3 105.9,333.4 104.6,329.5 103.3,325.5 102.2,321.6 101.0,317.7 99.9,313.7 98.9,309.8 97.9,305.9 96.9,301.9 96.0,298.0 95.1,294.1 94.2,290.1 93.4,286.2 92.6,282.3 91.8,278.3 91.0,274.4 90.3,270.5 89.6,266.6 88.9,262.6 88.3,258.7 87.6,254.8 87.0,250.8 86.4,246.9 85.8,243.0 85.2,239.0 84.7,235.1 84.1,231.2 83.6,227.2 83.1,223.3 82.6,219.4 82.1,215.4 81.6,211.5 81.2,207.6 80.7,203.6 80.3,199.7 79.9,195.8 79.5,191.8 79.0,187.9 78.6,184.0 78.3,180.0 77.9,176.1 77.5,172.2 77.1,168.2 76.8,164.3 76.4,160.4 76.1,156.4 75.8,152.5 75.4,148.6 75.1,144.6 74.8,140.7 74.5,136.8 74.2,132.9 73.9,128.9 73.6,125.0 73.3,121.1 73.0,117.1 72.8,113.2 72.5,109.3 72.2,105.3 72.0,101.4 71.7,97.5 71.5,93.5 71.2,89.6 71.0,85.7 70.7,81.7 70.5,77.8 70.3,73.9 70.0,69.9 69.8,66.2 107.8,66.2 108.2,69.9 108.7,73.9 109.2,77.8 109.7,81.7 110.2,85.7 110.8,89.6 111.3,93.5 111.8,97.5 112.4,101.4 113.0,105.3 113.5,109.3 114.1,113.2 114.7,117.1 115.3,121.1 115.9,125.0 116.6,128.9 117.2,132.9 117.9,136.8 118.5,140.7 119.2,144.6 119.9,148.6 120.6,152.5 121.4,156.4 122.1,160.4 122.9,164.3 123.6,168.2 124.4,172.2 125.2,176.1 126.1,180.0 126.9,184.0 127.8,187.9 128.7,191.8 129.6,195.8 130.5,199.7 131.4,203.6 132.4,207.6 133.4,211.5 134.4,215.4 135.5,219.4 136.6,223.3 137.7,227.2 138.8,231.2 140.0,235.1 141.2,239.0 142.4,243.0 143.7,246.9 145.0,250.8 146.4,254.8 147.8,258.7 149.2,262.6 150.7,266.6 152.2,270.5 153.8,274.4 155.5,278.3 157.1,282.3 158.9,286.2 160.7,290.1 162.6,294.1 164.5,298.0 166.6,301.9 168.7,305.9 170.9,309.8 173.1,313.7 175.5,317.7 178.0,321.6 180.6,325.5 183.3,329.5 186.1,333.4 189.1,337.3 192.2,341.3 195.5,345.2 198.9,349.1 202.5,353.1 206.4,357.0 210.4,360.9 214.7,364.9 219.3,368.8 224.1,372.7 229.3,376.7 234.8,380.6 240.7,384.5 247.1,388.5 254.0,392.4 261.4,396.3 269.5,400.3 278.3,404.2 288.0,408.1 298.7,412.1 310.5,416.0 323.7,419.9 338.5,423.8 355.3,427.8 374.6,431.7" fill="none" stroke="#000" stroke-width="3" stroke-linejoin="round"/>
</svg>
</body></html>
